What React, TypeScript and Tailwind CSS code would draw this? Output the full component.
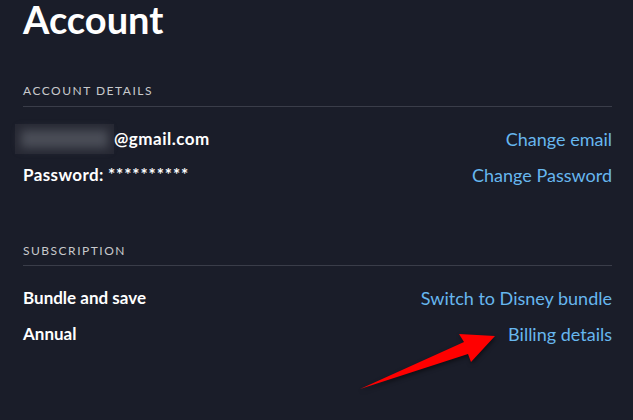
import React from 'react';

const SectionHeading: React.FC<{ label: string; className?: string }> = ({ label, className = '' }) => (
  <div className={`border-b border-[#3a3d49] ${className}`}>
    <div className="h-[20px] text-[12px] leading-[20px] tracking-[1.5px] text-[#c8c9cc]">{label}</div>
  </div>
);

const Row: React.FC<{ left: React.ReactNode; link: string }> = ({ left, link }) => (
  <div className="flex h-9 items-center justify-between">
    <div className="flex items-center text-[17px] font-bold text-white">{left}</div>
    <a href="#" className="text-[18px] text-[#67b7ef]">
      {link}
    </a>
  </div>
);

export default function App() {
  return (
    <div
      className="relative h-[420px] w-full overflow-hidden bg-[#1a1d29] pl-[23px] pr-[21px]"
      style={{ fontFamily: 'Lato, "Open Sans", sans-serif' }}
    >
      <h1 className="h-[38px] text-[38px] font-bold leading-[38px] text-white">Account</h1>

      <SectionHeading label="ACCOUNT DETAILS" className="mt-[43px] pb-[5px]" />
      <div className="mt-[14px]">
        <Row
          link="Change email"
          left={
            <>
              <div className="-ml-2 flex h-[30px] w-[99px] bg-[#262833] p-[6px]">
                <div className="flex-1 bg-[#4a4d57] blur-[5px]" />
              </div>
              <span className="tracking-[0.5px]">@gmail.com</span>
            </>
          }
        />
        <Row
          link="Change Password"
          left={
            <span>
              <span className="tracking-[0.4px]">Password:</span>{' '}
              <span className="tracking-[0.9px]">**********</span>
            </span>
          }
        />
      </div>

      <SectionHeading label="SUBSCRIPTION" className="mt-[48px] pb-[4px]" />
      <div className="mt-[14px]">
        <Row link="Switch to Disney bundle" left={<span>Bundle and save</span>} />
        <Row link="Billing details" left={<span>Annual</span>} />
      </div>

      {/* annotation arrow */}
      <svg className="absolute left-0 top-0" width="633" height="420" viewBox="0 0 633 420">
        <polygon
          points="495,336 459,334 464,342 360,389 468,354 471,362"
          fill="#ff0000"
          style={{ filter: 'drop-shadow(1px 2px 2px rgba(0,0,0,0.5))' }}
        />
      </svg>
    </div>
  );
}
